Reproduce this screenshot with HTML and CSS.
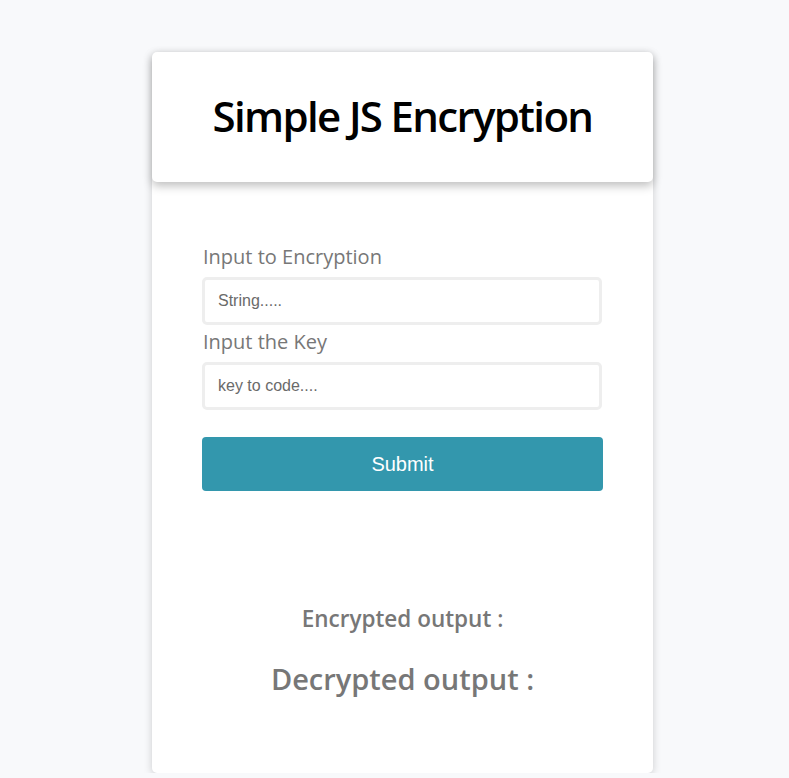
FILE: index.html
```html
<!DOCTYPE html>
<html>
<head>
<meta charset="utf-8">
<link rel="stylesheet" href="styles.css">
</head>
<body>
<div class="page">
  <div class="card">
    <div class="header"><h1>Simple JS Encryption</h1></div>
    <form class="form">
      <label class="label">Input to Encryption</label>
      <input class="field" type="text" placeholder="String.....">
      <label class="label">Input the Key</label>
      <input class="field" type="text" placeholder="key to code....">
      <button class="submit" type="button">Submit</button>
    </form>
    <div class="outputs">
      <h3 class="enc">Encrypted output :</h3>
      <h2 class="dec">Decrypted output :</h2>
    </div>
  </div>
</div>
</body>
</html>
```

FILE: styles.css
```css
html, body { margin: 0; padding: 0; }
body { background: #f8f9fb; font-family: "Open Sans", sans-serif; }
.page { padding: 52px 0 0 152px; }
.card {
  width: 501px;
  height: 721px;
  background: #fff;
  border-radius: 5px;
  box-shadow: 0 2px 8px rgba(0,0,0,0.18);
  display: flex;
  flex-direction: column;
}
.header {
  height: 130px;
  border-radius: 5px;
  box-shadow: 0 4px 10px rgba(0,0,0,0.25);
  display: flex;
  align-items: center;
  justify-content: center;
}
.header h1 {
  margin: 0 0 3px 0;
  font-size: 42px;
  font-weight: 600;
  color: #000;
  letter-spacing: -1.65px;
}
.form {
  display: flex;
  flex-direction: column;
  padding: 62px 50px 0 50px;
}
.label {
  font-size: 20px;
  color: #777;
  line-height: 26px;
  margin-left: 1px;
  margin-top: 4px;
}
.label:first-child { margin-top: 0; }
.field {
  box-sizing: border-box;
  width: 400px;
  height: 48px;
  border: 3px solid #eeeeee;
  border-radius: 5px;
  padding: 0 13px;
  font-family: "Liberation Sans", Arial, sans-serif;
  font-size: 16px;
  color: #333;
  outline: none;
  margin-top: 7px;
}
.field::placeholder { color: #6a6a6a; }
.submit {
  margin-top: 27px;
  width: 401px;
  height: 54px;
  background: #3397ad;
  color: #fff;
  border: none;
  border-radius: 4px;
  font-family: "Liberation Sans", Arial, sans-serif;
  font-size: 20px;
}
.outputs {
  display: flex;
  flex-direction: column;
  align-items: center;
  padding-top: 113px;
}
.enc {
  margin: 0;
  font-size: 22.5px;
  font-weight: 600;
  color: #777;
  line-height: 30px;
}
.dec {
  margin: 26px 0 0 0;
  font-size: 29px;
  font-weight: 600;
  color: #777;
  line-height: 38px;
}
```
